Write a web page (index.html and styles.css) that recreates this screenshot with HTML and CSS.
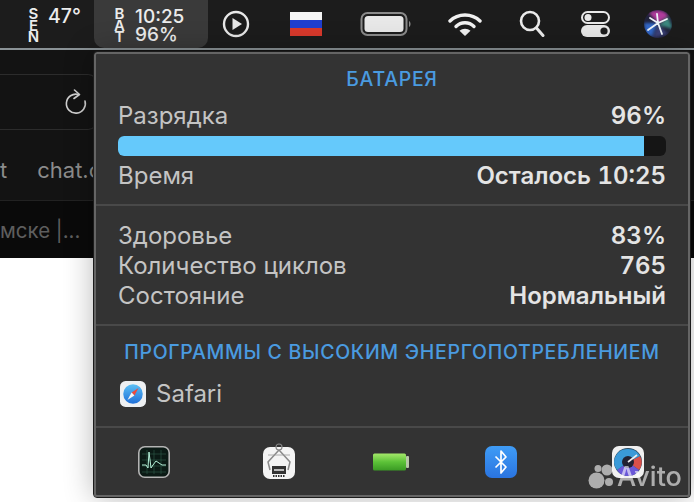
FILE: index.html
```html
<!DOCTYPE html>
<html lang="ru">
<head>
<meta charset="UTF-8">
<meta name="viewport" content="width=device-width, initial-scale=1.0">
<title>Battery</title>
<link rel="stylesheet" href="styles.css">
</head>
<body>
<div class="menubar">
    <div class="stack sen">SEN</div>
    <div class="temp">47°</div>
    <div class="bat-chip">
        <div class="stack">BAT</div>
        <div class="bat-values">10:25<br>96%</div>
    </div>
    <svg class="ic-play" width="28" height="28" viewBox="0 0 28 28"><circle cx="14" cy="14" r="12" fill="none" stroke="#e8e8e8" stroke-width="2.4"/><path d="M10.5 8 L20 14 L10.5 20 Z" fill="#e8e8e8"/></svg>
    <div class="flag"><i class="f-white"></i><i class="f-blue"></i><i class="f-red"></i></div>
    <svg class="ic-battery" width="52" height="26" viewBox="0 0 52 26"><rect x="1.5" y="2" width="45" height="22" rx="6" fill="none" stroke="#8a8a8a" stroke-width="2"/><rect x="4.5" y="5" width="39" height="16" rx="3.5" fill="#e8e8e8"/><path d="M49 10 C51 11 51 15 49 16 Z" fill="#8a8a8a"/></svg>
    <svg class="ic-wifi" width="34" height="26" viewBox="0 0 34 26"><path d="M2 10 C10 2 24 2 32 10" fill="none" stroke="#f0f0f0" stroke-width="3.4" stroke-linecap="round"/><path d="M8 15.500 C13 10.500 21 10.500 26 15.500" fill="none" stroke="#f0f0f0" stroke-width="3.4" stroke-linecap="round"/><path d="M17 25 L11.500 19.800 C14.500 17 19.500 17 22.500 19.800 Z" fill="#f0f0f0"/></svg>
    <svg class="ic-search" width="26" height="28" viewBox="0 0 26 28"><circle cx="11" cy="11" r="9" fill="none" stroke="#ececec" stroke-width="2.6"/><path d="M17.500 18 L24 25.500" stroke="#ececec" stroke-width="3" stroke-linecap="round"/></svg>
    <svg class="ic-toggles" width="30" height="28" viewBox="0 0 30 28"><rect x="1" y="2" width="27" height="11" rx="5.500" fill="none" stroke="#e8e8e8" stroke-width="2"/><circle cx="7" cy="7.500" r="3.500" fill="#e8e8e8"/><rect y="15" width="29" height="12" rx="6" fill="#e8e8e8"/><circle cx="23" cy="21" r="3.600" fill="#1c1c1c"/></svg>
    <svg class="ic-siri" width="30" height="30" viewBox="0 0 30 30"><defs><filter id="siriBlur"><feGaussianBlur stdDeviation="1.600"/></filter><clipPath id="siriClip"><circle cx="15" cy="15" r="14"/></clipPath></defs><g clip-path="url(#siriClip)"><rect width="30" height="30" fill="#20223a"/><g filter="url(#siriBlur)"><path d="M6 4 C12 0 22 1 25 7 L15 14 Z" fill="#b03a9c"/><path d="M25 8 L30 20 L16 16 Z" fill="#3a8a80"/><path d="M1 14 L14 14 L9 28 L2 24 Z" fill="#3368c8"/><path d="M15 15 L25 25 L10 29 Z" fill="#3a3f78"/></g></g><path d="M15 14 L5 21 M15 14 L7 9 M15 14 L24 10 M15 14 L19 25 M15 14 L14 5" stroke="#eef4f8" stroke-width="1.800" stroke-linecap="round"/></svg>
</div>
<div class="menu-edge"></div>
<div class="browser">
    <div class="address">
        <svg class="ic-reload" width="24" height="26" viewBox="0 0 24 26"><path d="M14.500 5.500 A9.500 9.500 0 1 0 21 12" fill="none" stroke="#d0d0d0" stroke-width="1.6" stroke-linecap="round"/><path d="M10.500 1 L15.500 5.500 L10 9.500" fill="none" stroke="#d0d0d0" stroke-width="1.6" stroke-linecap="round" stroke-linejoin="round"/></svg>
    </div>
    <div class="favorites"><span>t</span><span>chat.c</span></div>
    <div class="tabrow">мске |...</div>
</div>
<div class="popup">
    <h2 class="popup-title">БАТАРЕЯ</h2>
    <section class="sec sec-charge">
        <div class="row"><span>Разрядка</span><b>96%</b></div>
        <div class="bar"><div class="bar-fill" style="width: 526px"></div></div>
        <div class="row"><span>Время</span><b>Осталось 10:25</b></div>
    </section>
    <section class="sec sec-health">
        <div class="row"><span>Здоровье</span><b>83%</b></div>
        <div class="row"><span>Количество циклов</span><b>765</b></div>
        <div class="row"><span>Состояние</span><b>Нормальный</b></div>
    </section>
    <section class="sec sec-apps">
        <h3 class="apps-title">ПРОГРАММЫ С ВЫСОКИМ ЭНЕРГОПОТРЕБЛЕНИЕМ</h3>
        <div class="app">
            <svg width="26" height="26" viewBox="0 0 28 28"><defs><linearGradient id="safariBg" x1="0" y1="0" x2="0" y2="1"><stop offset="0" stop-color="#5cc0f5"/><stop offset="1" stop-color="#1f6fd8"/></linearGradient></defs><rect width="28" height="28" rx="6" fill="#eef0f2"/><circle cx="14" cy="14" r="10.500" fill="url(#safariBg)"/><path d="M20 7.500 L15.500 15.500 L12.500 12.500 Z" fill="#f04a3a"/><path d="M8 20.500 L12.500 12.500 L15.500 15.500 Z" fill="#f4f4f4"/></svg>
            <span>Safari</span>
        </div>
    </section>
    <section class="tools">
        <svg class="tool-activity" width="32" height="32" viewBox="0 0 32 32"><rect x="0.800" y="0.800" width="30.400" height="30.400" rx="6" fill="#0b1a15" stroke="#b4b4b4" stroke-width="1.600"/><path d="M4 8 H28 M4 14 H28 M4 20 H28 M4 26 H28 M9 4 V28 M16 4 V28 M23 4 V28" stroke="#2f5a4c" stroke-width="0.600"/><path d="M4 19 H8 L10 22 L11 6 L13 22 L15 19 L18 15 L21 17 L24 19 H28" fill="none" stroke="#b4f0d8" stroke-width="1"/></svg>
        <svg class="tool-cpu" width="34" height="37" viewBox="0 0 34 37"><rect x="1" y="5" width="32" height="32" rx="7" fill="#f4f4f4"/><circle cx="17" cy="5" r="3" fill="none" stroke="#888" stroke-width="1.200"/><path d="M17 8 L6 20 L8 28 M17 8 L28 20 L26 28" fill="none" stroke="#8a8a8a" stroke-width="1.500"/><path d="M6 13 H28" stroke="#999" stroke-width="0.800"/><rect x="10" y="24" width="14" height="8" fill="#333"/><path d="M11 34 H23" stroke="#333" stroke-width="2" stroke-dasharray="1.500 1"/><path d="M12 28 H22" stroke="#bbb" stroke-width="2"/></svg>
        <svg class="tool-battery" width="36" height="18" viewBox="0 0 36 18"><defs><linearGradient id="battGreen" x1="0" y1="0" x2="0" y2="1"><stop offset="0" stop-color="#a4e86a"/><stop offset="0.5" stop-color="#5cc238"/><stop offset="1" stop-color="#3a9a24"/></linearGradient></defs><rect y="0.500" width="33" height="17" rx="1.500" fill="url(#battGreen)"/><rect x="33" y="3" width="3" height="12" rx="1" fill="#b8c8a8"/></svg>
        <svg class="tool-bt" width="32" height="32" viewBox="0 0 32 32"><defs><linearGradient id="btBg" x1="0" y1="0" x2="0" y2="1"><stop offset="0" stop-color="#3f9cf6"/><stop offset="1" stop-color="#2a74e0"/></linearGradient></defs><rect width="32" height="32" rx="7" fill="url(#btBg)"/><path d="M10.500 10.500 L21 21 L16 27 V5 L21 11 L10.500 21.500" fill="none" stroke="#fff" stroke-width="1.700" stroke-linejoin="round"/></svg>
        <svg class="tool-gauge" width="32" height="32" viewBox="0 0 32 32"><rect width="32" height="32" rx="7" fill="#f0f0f0"/><circle cx="16" cy="16" r="14" fill="#2a4a60"/><path d="M16 16 L28 10 A13 13 0 0 1 27 24 Z" fill="#d9504a"/><path d="M16 16 L27 24 A13 13 0 0 1 5 24 Z" fill="#6a58d8"/><path d="M16 16 L5 24 A13 13 0 0 1 16 3 A13 13 0 0 1 28 10 Z" fill="#3a9ad8"/><circle cx="16" cy="16" r="6" fill="#223"/><path d="M16 16 L25 9" stroke="#eee" stroke-width="1.600"/></svg>
    </section>
</div>
<div class="avito">
    <svg width="29" height="25" viewBox="0 0 29 25"><circle cx="8.500" cy="16.500" r="8" fill="#fff"/><circle cx="19" cy="6" r="5.500" fill="#fff"/><circle cx="10" cy="4.500" r="3.500" fill="#fff"/><circle cx="21" cy="18" r="4" fill="#fff"/></svg>
    <span>Avito</span>
</div>
</body>
</html>
```

FILE: styles.css
```css
html, body {
    margin: 0;
    padding: 0;
}
body {
    width: 694px;
    height: 502px;
    overflow: hidden;
    position: relative;
    background: #fff;
    font-family: Inter, "Noto Sans", sans-serif;
}

/* top menu bar */
.menubar {
    display: flex;
    align-items: center;
    height: 48px;
    background: #1c1c1c;
    color: #ececec;
}
.stack {
    writing-mode: vertical-rl;
    text-orientation: upright;
    width: 12px;
    height: 36px;
    margin-bottom: 4px;
    font-size: 15px;
    line-height: 12px;
    letter-spacing: -7.5px;
    font-weight: 600;
}
.sen {
    margin-left: 27px;
}
.temp {
    margin-left: 9px;
    width: 46px;
    font-size: 19.5px;
    font-weight: 500;
    margin-bottom: 17px;
}
.bat-chip {
    display: flex;
    align-items: center;
    width: 114px;
    height: 48px;
    background: #3a3a3a;
    border-radius: 0 0 10px 10px;
    box-sizing: border-box;
    padding-left: 19px;
}
.bat-values {
    margin-left: 10px;
    margin-top: 3px;
    font-size: 19px;
    line-height: 18px;
    font-weight: 500;
}
.ic-play { margin-left: 14px; }
.flag {
    display: flex;
    flex-direction: column;
    width: 32px;
    margin-left: 40px;
}
.flag i {
    display: block;
    height: 8px;
}
.f-white { background: #f4f4f4; }
.f-blue { background: #1f3fd0; }
.f-red { background: #d8392c; }
.ic-battery { margin-left: 38px; }
.ic-wifi { margin-left: 36px; }
.ic-search { margin-left: 37px; }
.ic-toggles { margin-left: 36px; }
.ic-siri { margin-left: 32px; }

.menu-edge {
    height: 2px;
    background: #8a9296;
}

/* browser behind the popup */
.browser {
    height: 208px;
    background: #131313;
    overflow: hidden;
}
.address {
    display: flex;
    align-items: center;
    justify-content: flex-end;
    box-sizing: border-box;
    width: 98px;
    height: 56px;
    margin-top: 24px;
    padding-right: 9px;
    border: 1px solid #2c2c2c;
    border-left: none;
    border-radius: 0 10px 10px 0;
}
.favorites {
    display: flex;
    gap: 30px;
    height: 70px;
    box-sizing: border-box;
    padding-top: 27px;
    font-size: 22px;
    color: #8c8c8c;
    white-space: nowrap;
}
.tabrow {
    height: 58px;
    line-height: 60px;
    background: #0a0a0a;
    border-top: 1px solid #222;
    font-size: 20.5px;
    color: #5e5e5e;
    white-space: nowrap;
}

/* battery popup */
.popup {
    position: absolute;
    left: 94px;
    top: 52px;
    width: 596px;
    height: 445px;
    box-sizing: border-box;
    display: flex;
    flex-direction: column;
    background: #333;
    border: 2px solid #656565;
    outline: 1px solid #1c1c1c;
    border-radius: 3px;
    box-shadow: 0 0 30px rgba(0, 0, 0, 0.3);
}
.popup-title, .apps-title {
    margin: 0;
    text-align: center;
    color: #4a9be0;
    font-size: 19.5px;
    font-weight: 500;
    letter-spacing: 0.7px;
}
.popup-title {
    height: 47px;
    line-height: 50px;
}
.sec {
    box-sizing: border-box;
    padding: 0 22px;
    border-bottom: 2px solid #494949;
}
.row {
    display: flex;
    justify-content: space-between;
    height: 30px;
    line-height: 30px;
    font-size: 24px;
    color: #c4c4c4;
}
.row b {
    font-weight: 600;
    color: #e4e4e4;
    font-variant-numeric: tabular-nums;
}
.sec-charge { height: 105px; }
.bar {
    height: 20px;
    border-radius: 6px;
    background: #151515;
    overflow: hidden;
    margin: 5px 0;
}
.bar-fill {
    height: 100%;
    background: #65c9fb;
}
.sec-health {
    height: 120px;
    padding-top: 15px;
}
.sec-apps {
    height: 102px;
    padding-top: 12px;
}
.apps-title {
    line-height: 28px;
}
.app {
    display: flex;
    align-items: center;
    gap: 10px;
    margin-top: 13px;
    padding-left: 2px;
    font-size: 24px;
    color: #c4c4c4;
}
.tools {
    flex: 1;
    display: flex;
    align-items: center;
    padding-left: 42px;
}
.tool-cpu { margin-left: 92px; margin-bottom: 2px; }
.tool-battery { margin-left: 77px; }
.tool-bt { margin-left: 76px; }
.tool-gauge { margin-left: 95px; }

/* watermark */
.avito {
    position: absolute;
    left: 588px;
    top: 463px;
    display: flex;
    align-items: center;
    color: #fff;
    opacity: 0.6;
    font-size: 27px;
    font-weight: 500;
    line-height: 27px;
}
```
